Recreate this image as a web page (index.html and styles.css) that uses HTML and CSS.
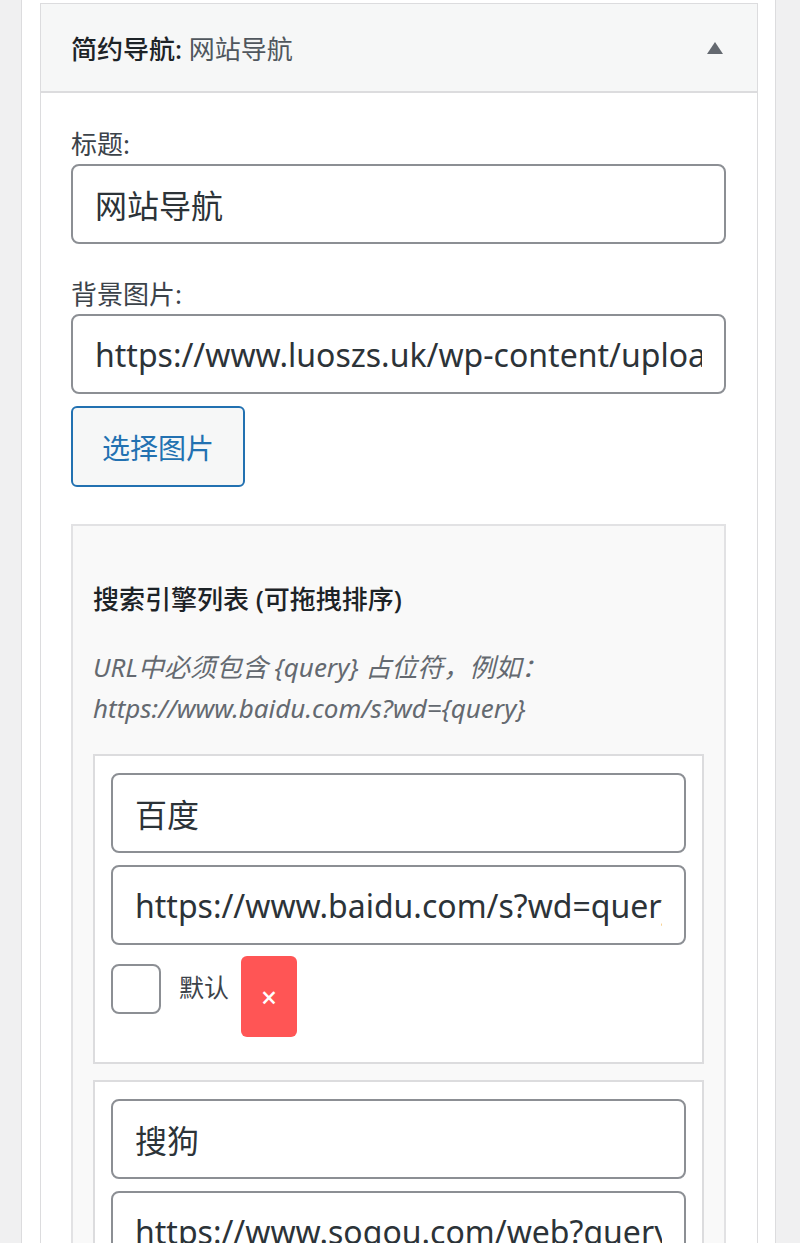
FILE: index.html
```html
<!DOCTYPE html>
<html lang="zh-CN">
<head>
    <meta charset="UTF-8">
    <meta name="viewport" content="width=device-width, initial-scale=1.0">
    <title>简约导航 - 小工具设置</title>
    <link rel="stylesheet" href="styles.css">
</head>
<body>

<div class="sidebar">
    <div class="widget">
        <div class="widget-top">
            <h3 class="widget-title">简约导航: <span class="in-title">网站导航</span></h3>
            <span class="toggle-arrow"></span>
        </div>

        <div class="widget-inside">
            <p class="field">
                <label for="nav-title">标题:</label>
                <input type="text" id="nav-title" class="text-input" value="网站导航">
            </p>
            <p class="field">
                <label for="nav-bg">背景图片:</label>
                <input type="text" id="nav-bg" class="text-input" value="https://www.luoszs.uk/wp-content/uploads/2024/bg.jpg">
                <button type="button" class="select-btn">选择图片</button>
            </p>

            <!-- Search engines -->
            <div class="engines-panel">
                <h4>搜索引擎列表 (可拖拽排序)</h4>
                <p class="description">URL中必须包含 {query} 占位符，例如：<br>https://www.baidu.com/s?wd={query}</p>

                <div class="engine-item">
                    <input type="text" class="text-input" value="百度">
                    <input type="text" class="text-input" value="https://www.baidu.com/s?wd=query">
                    <div class="engine-row">
                        <input type="checkbox" class="check">
                        <span class="check-label">默认</span>
                        <button type="button" class="remove-btn">×</button>
                    </div>
                </div>

                <div class="engine-item">
                    <input type="text" class="text-input" value="搜狗">
                    <input type="text" class="text-input" value="https://www.sogou.com/web?query=query">
                    <div class="engine-row">
                        <input type="checkbox" class="check">
                        <span class="check-label">默认</span>
                        <button type="button" class="remove-btn">×</button>
                    </div>
                </div>
            </div>
        </div>
    </div>
</div>

</body>
</html>
```

FILE: styles.css
```css
/* Page */
body {
    margin: 0;
    background-color: #f0f0f1;
    font-family: "Noto Sans", "Noto Sans CJK SC", sans-serif;
    color: #3c434a;
}
.sidebar {
    box-sizing: border-box;
    width: 755px;
    height: 100vh;
    overflow: hidden;
    margin-left: 21px;
    padding: 3px 16px 0 18px;
    background-color: #fff;
    border-left: 1px solid #dcdcde;
    border-right: 1px solid #dcdcde;
}

/* Widget box */
.widget {
    box-sizing: border-box;
    width: 718px;
    border: 1px solid #dcdcde;
    background-color: #fff;
}
.widget-top {
    display: flex;
    align-items: center;
    justify-content: space-between;
    height: 87px;
    padding: 0 34px 0 30px;
    background-color: #f6f7f7;
    border-bottom: 2px solid #dcdcde;
}
.widget-title {
    margin: 0;
    font-size: 26px;
    font-weight: 500;
    color: #1d2327;
}
.widget-title .in-title {
    font-weight: 400;
    color: #50575e;
}
.toggle-arrow {
    width: 0;
    height: 0;
    border-left: 8px solid transparent;
    border-right: 8px solid transparent;
    border-bottom: 12px solid #646970;
}

.widget-inside {
    padding: 33px 31px 0 30px;
}
.field {
    margin: 0 0 32px;
}
.field label {
    display: block;
    font-size: 26px;
    line-height: 36px;
    margin-bottom: 2px;
    color: #3c434a;
}
.text-input {
    display: block;
    box-sizing: border-box;
    width: 100%;
    height: 80px;
    padding: 0 22px;
    font-family: "Noto Sans", "Noto Sans CJK SC", sans-serif;
    font-size: 32px;
    color: #2c3338;
    background-color: #fff;
    border: 2px solid #8c8f94;
    border-radius: 8px;
    outline: none;
}
.select-btn {
    display: block;
    box-sizing: border-box;
    margin-top: 12px;
    height: 81px;
    padding: 0 29px;
    font-family: "Noto Sans", "Noto Sans CJK SC", sans-serif;
    font-size: 28px;
    color: #2271b1;
    background-color: #f6f7f7;
    border: 2px solid #2271b1;
    border-radius: 6px;
}
.field:last-of-type {
    margin-bottom: 37px;
}

/* Search engines panel */
.engines-panel {
    padding: 0 20px 20px 20px;
    background-color: #f9f9f9;
    border: 2px solid #e2e2e4;
}
.engines-panel h4 {
    margin: 55px 0 30px;
    font-size: 26px;
    line-height: 36px;
    font-weight: 500;
    color: #1d2327;
}
.description {
    margin: 0 0 25px;
    font-size: 26px;
    line-height: 41px;
    font-style: italic;
    color: #646970;
}
.engine-item {
    padding: 17px 16px 25px;
    margin-bottom: 16px;
    background-color: #fff;
    border: 2px solid #dcdcde;
}
.engine-item .text-input + .text-input {
    margin-top: 12px;
}
.engine-row {
    display: flex;
    align-items: flex-start;
    margin-top: 11px;
}
.check {
    appearance: none;
    box-sizing: border-box;
    width: 50px;
    height: 50px;
    margin: 8px 0 0;
    border: 2px solid #8c8f94;
    border-radius: 8px;
    background-color: #fff;
}
.check-label {
    margin: 8px 0 0 18px;
    font-size: 25px;
    line-height: 46px;
    color: #3c434a;
}
.remove-btn {
    width: 56px;
    height: 81px;
    margin-left: 12px;
    padding: 0;
    font-family: "Noto Sans", sans-serif;
    font-size: 28px;
    font-weight: 500;
    color: #fff;
    background-color: #ff5555;
    border: none;
    border-radius: 6px;
}
```
